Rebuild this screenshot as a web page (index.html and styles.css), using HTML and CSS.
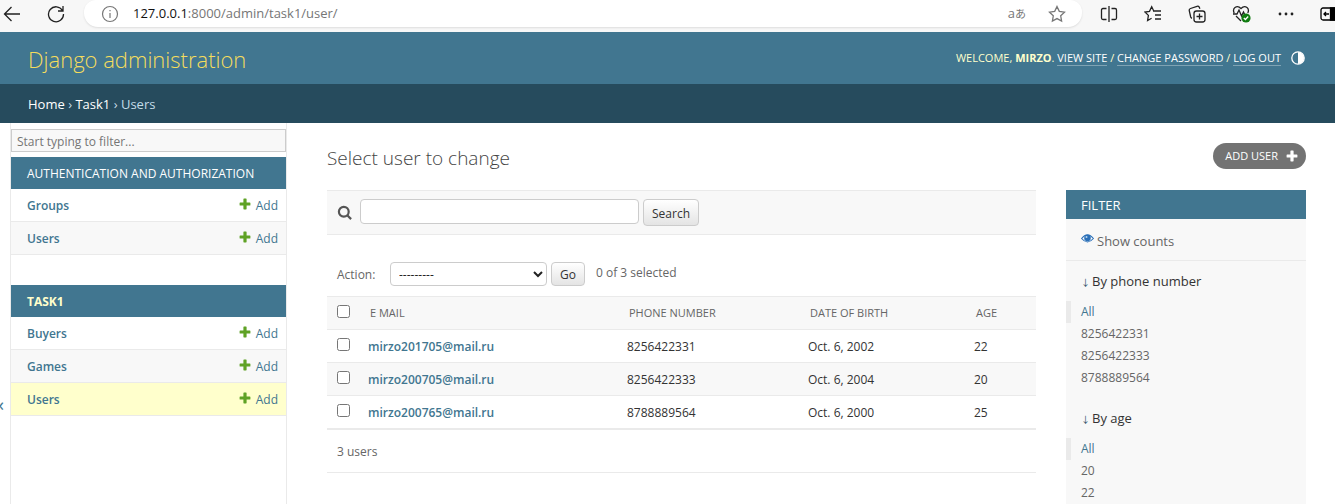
FILE: index.html
```
<!DOCTYPE html>
<html lang="en">
<head>
<meta charset="utf-8">
<title>Select user to change | Django site admin</title>
<link rel="stylesheet" href="styles.css">
</head>
<body>
<svg class="defs" aria-hidden="true">
  <symbol id="plus" viewBox="0 0 12 12"><path d="M4.4 1.2Q4.4 .6 5 .6h2q.6 0 .6.6v3.2h3.2q.6 0 .6.6v2q0 .6-.6.6H7.600v3.200q0 .6-.6.6H5q-.6 0-.6-.6V7.600H1.200q-.6 0-.6-.6V5q0-.6.6-.6h3.200z" fill="currentColor"/></symbol>
</svg>

<div class="browser">
  <div class="nav-buttons">
    <button class="tool" aria-label="Back"><svg width="20" height="18" viewBox="0 0 20 18"><path d="M9.500 2 2.500 9l7 7M2.500 9H18"/></svg></button>
    <button class="tool" aria-label="Refresh"><svg width="18" height="18" viewBox="0 0 18 18"><path d="M15.500 5.500A7.500 7.500 0 1 0 16.500 9M16 1v5h-5"/></svg></button>
  </div>
  <div class="address">
    <svg class="info" width="18" height="18" viewBox="0 0 18 18"><circle cx="9" cy="9" r="7.500"/><path d="M9 8v5M9 5v1.300" /></svg>
    <span class="url"><b>127.0.0.1</b>:8000/admin/task1/user/</span>
    <button class="translate" aria-label="Translate">a<span>あ</span></button>
    <button class="tool star" aria-label="Favorite"><svg width="18" height="18" viewBox="0 0 18 18"><path d="m9 1.500 2.300 4.900 5.200.7-3.800 3.700.9 5.300L9 13.600l-4.600 2.500.9-5.300-3.800-3.700 5.200-.7z"/></svg></button>
  </div>
  <div class="tools">
    <button class="tool" aria-label="Split screen"><svg width="18" height="18" viewBox="0 0 18 18"><path d="M9 1v16M6.500 3.500H3q-1.500 0-1.500 1.500v8q0 1.500 1.500 1.500h3.500M11.500 3.500H15q1.500 0 1.500 1.500v8q0 1.500-1.500 1.500h-3.500"/></svg></button>
    <button class="tool" aria-label="Favorites"><svg width="18" height="18" viewBox="0 0 18 18"><path d="M9.500 5.500 7.700 1.800 5.500 6.300l-4.500.7 3.400 3.400-.8 5.100 4-2.200M9 6h8M11 10h6M11 14h6"/></svg></button>
    <button class="tool" aria-label="Collections"><svg width="18" height="18" viewBox="0 0 18 18"><rect x="6" y="6" width="11" height="11" rx="2.500"/><path d="M11.500 8.500v6M8.500 11.500h6M4 13.300Q3 13 2.700 12L1.200 5.500Q1 4 2.500 3.500L9 1.300q1.500-.5 2.200.8l.7 1.700"/></svg></button>
    <button class="tool" aria-label="Browser essentials"><svg width="20" height="18" viewBox="0 0 20 18"><path d="M2.200 8Q.5 4.500 3 2.500q3-2 6 1 3-3 6-1 2.400 2 .8 5.500M4 11l5 5M1 9h4l2-4 2.500 6L11.500 7l1 2"/><circle cx="14" cy="13" r="4.600" fill="#107c10" stroke="none"/><path d="m11.800 13 1.600 1.500 2.800-3" stroke="#fff"/></svg></button>
    <button class="tool" aria-label="More"><svg width="16" height="18" viewBox="1 0 16 18"><g fill="#222" stroke="none"><circle cx="3" cy="9" r="1.400"/><circle cx="9" cy="9" r="1.400"/><circle cx="15" cy="9" r="1.400"/></g></svg></button>
    <button class="tool panel" aria-label="Sidebar"><svg width="18" height="14" viewBox="0 0 18 14"><rect x="1" y="1" width="16" height="12" rx="2"/><path d="M10.500 1H18v12h-7.500z" fill="#000"/><path d="M9 7H4m2-2L4 7l2 2"/></svg></button>
  </div>
</div>

<header class="header">
  <h1 class="branding"><a href="#">Django administration</a></h1>
  <div class="user-tools">
    <span>WELCOME, <strong>MIRZO</strong>. <a href="#">VIEW SITE</a> / <a href="#">CHANGE PASSWORD</a> / <a href="#">LOG OUT</a></span>
    <button class="theme" aria-label="Toggle theme"><svg width="14" height="14" viewBox="0 0 14 14"><circle cx="7" cy="7" r="6.200" fill="none" stroke="#fff" stroke-width="1.300"/><path d="M7 1a6 6 0 0 1 0 12z" fill="#fff"/></svg></button>
  </div>
</header>

<nav class="breadcrumbs" aria-label="Breadcrumbs"><a href="#">Home</a> › <a href="#">Task1</a> › Users</nav>

<div class="main">
  <button class="toggle" aria-label="Toggle navigation">«</button>
  <nav class="sidebar" aria-label="Sidebar">
    <input class="nav-filter" type="search" placeholder="Start typing to filter..." aria-label="Filter navigation items">
    <table class="module">
      <caption><a href="#">AUTHENTICATION AND AUTHORIZATION</a></caption>
      <tr><th scope="row"><a href="#">Groups</a></th><td><a class="add" href="#"><svg width="12" height="12"><use href="#plus"/></svg>Add</a></td></tr>
      <tr><th scope="row"><a href="#">Users</a></th><td><a class="add" href="#"><svg width="12" height="12"><use href="#plus"/></svg>Add</a></td></tr>
    </table>
    <table class="module">
      <caption class="current"><a href="#">TASK1</a></caption>
      <tr><th scope="row"><a href="#">Buyers</a></th><td><a class="add" href="#"><svg width="12" height="12"><use href="#plus"/></svg>Add</a></td></tr>
      <tr><th scope="row"><a href="#">Games</a></th><td><a class="add" href="#"><svg width="12" height="12"><use href="#plus"/></svg>Add</a></td></tr>
      <tr class="current"><th scope="row"><a href="#">Users</a></th><td><a class="add" href="#"><svg width="12" height="12"><use href="#plus"/></svg>Add</a></td></tr>
    </table>
  </nav>

  <main class="content">
    <div class="title-row">
      <h2>Select user to change</h2>
      <a class="add-user" href="#">ADD USER<svg width="12" height="12"><use href="#plus"/></svg></a>
    </div>
    <div class="changelist">
      <div class="results">
        <form class="search">
          <label for="q"><svg width="16" height="16" viewBox="0 0 16 16"><circle cx="6.800" cy="6.800" r="4.900"/><path d="m10.500 10.500 3.600 3.600"/></svg></label>
          <input id="q" type="text" aria-label="Search users">
          <button class="btn" type="button">Search</button>
        </form>
        <div class="actions">
          <label for="action">Action:</label>
          <select id="action"><option>---------</option><option>Delete selected users</option></select>
          <button class="btn" type="button">Go</button>
          <span class="counter">0 of 3 selected</span>
        </div>
        <table class="list">
          <thead><tr><th class="c-check"><input type="checkbox" aria-label="Select all"></th><th class="c-mail">E MAIL</th><th class="c-phone">PHONE NUMBER</th><th class="c-birth">DATE OF BIRTH</th><th>AGE</th></tr></thead>
          <tbody>
            <tr><td><input type="checkbox" aria-label="Select mirzo201705@mail.ru"></td><th scope="row"><a href="#">mirzo201705@mail.ru</a></th><td>8256422331</td><td>Oct. 6, 2002</td><td>22</td></tr>
            <tr><td><input type="checkbox" aria-label="Select mirzo200705@mail.ru"></td><th scope="row"><a href="#">mirzo200705@mail.ru</a></th><td>8256422333</td><td>Oct. 6, 2004</td><td>20</td></tr>
            <tr><td><input type="checkbox" aria-label="Select mirzo200765@mail.ru"></td><th scope="row"><a href="#">mirzo200765@mail.ru</a></th><td>8788889564</td><td>Oct. 6, 2000</td><td>25</td></tr>
          </tbody>
        </table>
        <p class="paginator">3 users</p>
      </div>
      <aside class="filter">
        <h2>FILTER</h2>
        <a class="counts" href="#"><svg width="13" height="12" viewBox="0 0 13 12"><path d="M.6 5.500Q6.500-1.800 12.400 5.500 6.500 12.400.6 5.500z" fill="#fff" stroke="#2b70b8" stroke-width="1.100"/><circle cx="6.500" cy="5" r="3.300" fill="#2b70b8"/><circle cx="5.500" cy="4" r="1" fill="#b8d4ee"/></svg>Show counts</a>
        <details open>
          <summary>By phone number</summary>
          <ul><li class="selected"><a href="#">All</a></li><li><a href="#">8256422331</a></li><li><a href="#">8256422333</a></li><li><a href="#">8788889564</a></li></ul>
        </details>
        <details open>
          <summary>By age</summary>
          <ul><li class="selected"><a href="#">All</a></li><li><a href="#">20</a></li><li><a href="#">22</a></li></ul>
        </details>
      </aside>
    </div>
  </main>
</div>
</body>
</html>
```
FILE: styles.css
```
* { box-sizing: border-box; }

html, body { height: 100%; }

body {
  margin: 0;
  display: flex;
  flex-direction: column;
  overflow: hidden;
  background: #fff;
  color: #333;
  font: 12px/16px "Open Sans", "Noto Sans", sans-serif;
}

a { color: #417690; text-decoration: none; }
button, input, select { font: inherit; color: inherit; }
h1, h2, p, ul { margin: 0; padding: 0; font-weight: 400; }
table { border-collapse: separate; border-spacing: 0; width: 100%; }
svg { flex: none; }
.defs { position: absolute; width: 0; height: 0; }

/* Browser toolbar */
.browser {
  display: flex;
  flex: none;
  height: 32px;
  padding-bottom: 5px;
  background: #f7f7f7;
  overflow: hidden;
}
.tool, .translate, .theme, .toggle { border: 0; padding: 0; background: none; }
.tool { display: flex; align-items: center; }
.tool svg { fill: none; stroke: #222; stroke-width: 1.3; }
.nav-buttons { display: flex; flex: none; width: 84px; padding-left: 2px; gap: 25px; align-items: center; }
.address {
  display: flex;
  flex: 1;
  align-items: center;
  padding: 0 16px 0 17px;
  background: #fff;
  border-radius: 12px 12px 14px 14px;
  box-shadow: 0 1px 2px #ddd;
}
.info { fill: none; stroke: #777; stroke-width: 1.2; }
.url { flex: 1; margin-left: 14px; padding-bottom: 2px; font-size: 13px; color: #767676; }
.url b { font-weight: 400; color: #111; }
.translate { padding-bottom: 2px; font-size: 13px; color: #777; }
.translate span { font: 11px "Noto Sans CJK JP", sans-serif; }
.star { margin-left: 22px; }
.star svg { stroke: #777; }
.tools { display: flex; flex: none; width: 253px; padding-left: 18px; gap: 26px; align-items: center; }
.panel svg { stroke: #000; }

/* Header */
.header {
  display: flex;
  flex: none;
  align-items: center;
  justify-content: space-between;
  padding: 10px 30px 10px 28px;
  background: #417690;
  color: #ffc;
}
.branding { padding-top: 2px; font-size: 22px; line-height: 30px; font-weight: 300; }
.branding a { color: #f5dd5d; }
.user-tools { display: flex; align-items: center; gap: 10px; font-size: 11px; }
.user-tools span a { color: #fff; border-bottom: 1px solid #7fa3b4; }
.theme { display: flex; }

.breadcrumbs { flex: none; padding: 12px 28px 11px; background: #264b5d; color: #c4dce8; font-size: 13px; }
.breadcrumbs a { color: #fff; font-weight: 500; }

/* Sidebar */
.main { display: flex; flex: 1; min-height: 0; overflow: hidden; }
.toggle {
  display: flex;
  flex: none;
  width: 10px;
  justify-content: flex-end;
  padding: 190px 6px 10px 0;
  align-items: center;
  color: #417690;
  font-size: 18px;
  overflow: hidden;
}
.sidebar { flex: none; width: 277px; padding-top: 6px; border: solid #eaeaea; border-width: 0 1px; }
.nav-filter {
  display: block;
  width: 100%;
  height: 23px;
  padding: 3px 5px 1px;
  margin-bottom: 5px;
  background: #f8f8f8;
  border: 1px solid #ccc;
  appearance: none;
}
.nav-filter::placeholder { color: #757575; }
.module { margin-bottom: 30px; }
.module caption { padding: 9px 16px 7px; background: #417690; text-align: left; }
.module caption a { color: #fff; }
.module caption.current a { color: #ffc; font-weight: 700; }
.module th, .module td { height: 33px; padding: 9px 8px 7px 16px; border-bottom: 1px solid #eaeaea; text-align: left; }
.module th a { font-weight: 600; }
.module tr:nth-child(even) { background: #f8f8f8; }
.module tr.current { background: #ffc; }
.add { display: flex; justify-content: flex-end; gap: 5px; }
.add svg { color: #5fa225; }

/* Content */
.content { flex: 1; min-width: 0; padding: 20px 29px 0 40px; }
.title-row { display: flex; justify-content: space-between; align-items: flex-start; margin-bottom: 17px; }
.title-row h2 { font-size: 19px; line-height: 30px; font-weight: 300; color: #444; }
.add-user {
  display: flex;
  align-items: center;
  gap: 8px;
  padding: 5px 8px 5px 12px;
  border-radius: 15px;
  background: #737373;
  color: #fff;
  font-size: 11px;
}
.changelist { display: flex; align-items: flex-start; gap: 30px; }
.results { flex: 1; min-width: 0; }
.search {
  display: flex;
  gap: 4px;
  padding: 8px 10px;
  background: #f8f8f8;
  border: solid #eaeaea;
  border-width: 1px 0;
}
.search label { display: flex; padding-top: 6px; width: 19px; }
.search label svg { fill: none; stroke: #555; stroke-width: 2.2; }
.search input { width: 279px; height: 25px; border: 1px solid #ccc; border-radius: 4px; background: #fff; }
.btn {
  padding: 5px 8px 3px;
  border: 1px solid #ccc;
  border-radius: 4px;
  background: linear-gradient(#fff, #e4e4e4);
}
.search .btn { height: 27px; }
.actions { display: flex; align-items: flex-start; gap: 4px; padding: 27px 10px 10px; color: #666; }
.actions label { width: 49px; padding-top: 5px; }
.actions select { width: 157px; height: 24px; padding: 0 4px; border: 1px solid #ccc; border-radius: 4px; background: #fff; color: #222; }
.actions .btn { height: 24px; padding: 1px 8px 0; color: #333; }
.counter { padding: 3px 0 0 7px; }

.list { table-layout: fixed; border-bottom: 1px solid #eaeaea; }
.list th, .list td { height: 33px; padding: 9px 8px 7px; border-bottom: 1px solid #eaeaea; text-align: left; font-weight: 400; }
.list thead th { height: 34px; border-top: 1px solid #eaeaea; background: #f8f8f8; color: #666; font-size: 11px; font-weight: 500; padding: 8px 10px; }
.list tbody tr:nth-child(even) { background: #f8f8f8; }
.list tbody th a { font-weight: 600; }
.list input { display: block; width: 13px; height: 13px; margin: 0 0 3px; }
.list tbody td:first-child { padding: 8px 10px; }
.c-check { width: 33px; }
.c-phone { width: 181px; }
.c-birth { width: 166px; }
.c-mail { width: 259px; }
.paginator { padding: 14px 10px 12px; border-bottom: 1px solid #eaeaea; color: #666; }

/* Filter panel */
.filter { flex: none; width: 240px; background: #f8f8f8; }
.filter h2 { padding: 7px 15px 6px; background: #417690; color: #fff; font-size: 13px; }
.counts { display: flex; gap: 3px; padding: 14px 15px 11px; border-bottom: 1px solid #eaeaea; color: #666; font-size: 13px; }
.filter summary { padding: 12px 15px 10px; font-size: 13px; list-style: none; }
.filter summary::before { content: "↓"; margin-right: 2px; color: #264b5d; font-family: "Noto Sans CJK JP", sans-serif; font-size: 9px; }
.filter ul { padding-bottom: 9px; list-style: none; }
.filter li { padding: 3px 10px; border-left: 5px solid transparent; }
.filter li a { color: #666; }
.filter .selected { border-left-color: #eaeaea; }
.filter .selected a { color: #417690; }
```
